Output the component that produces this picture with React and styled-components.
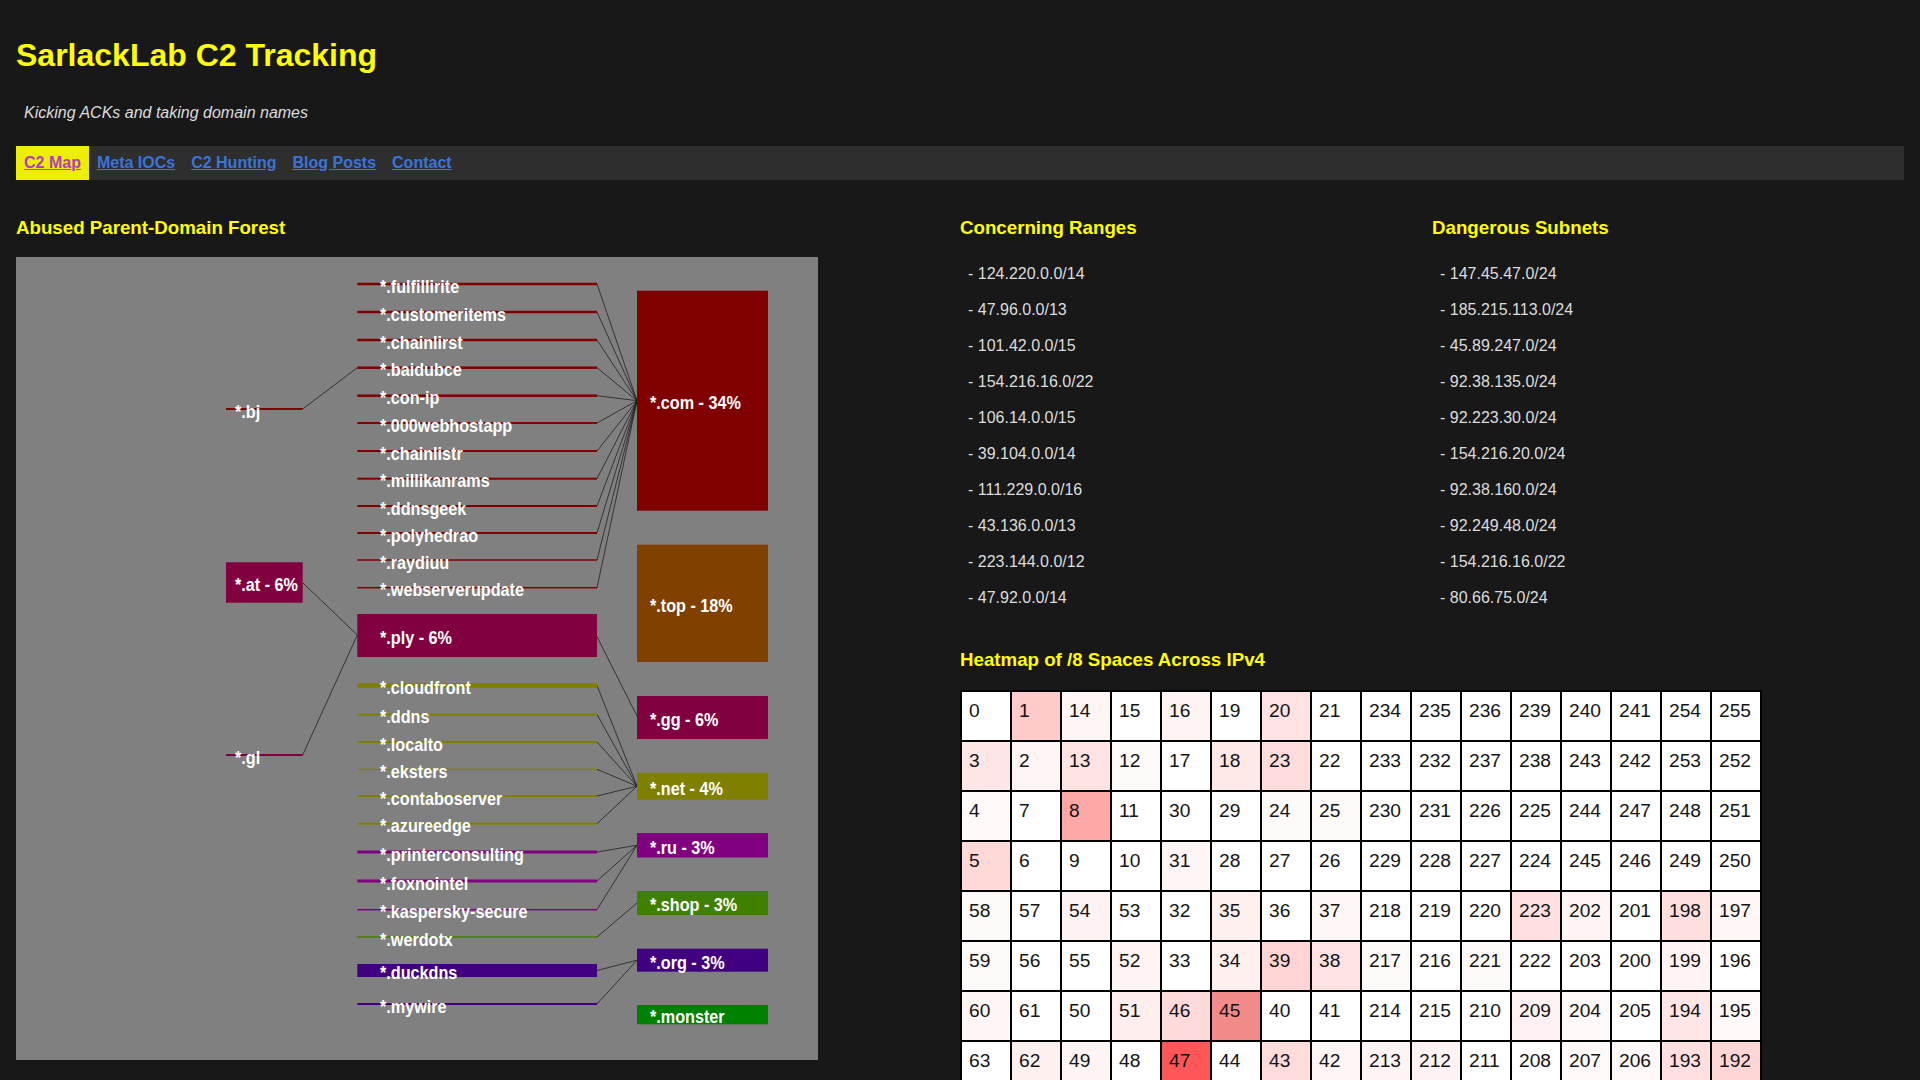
import React from 'react';
import styled, { createGlobalStyle } from 'styled-components';

const GlobalStyle = createGlobalStyle`
  html, body { margin: 0; padding: 0; background: #181818; }
  body { font-family: "Liberation Sans", Arial, sans-serif; color: #dddddd; }
  * { box-sizing: border-box; }
`;

const Page = styled.div`
  padding: 16px;
`;

const Title = styled.h1`
  margin: 21.44px 0;
  font-size: 32px;
  font-weight: 700;
  line-height: normal;
  color: #ffff00;
`;

const Tagline = styled.p`
  margin: 16px 0;
  padding: 8px;
  font-size: 16px;
  line-height: normal;
  font-style: italic;
  color: #dddddd;
`;

const Nav = styled.nav`
  display: flex;
  height: 34px;
  background: #2e2e2e;
`;

const NavLink = styled.a`
  display: block;
  padding: 8px;
  font-size: 16px;
  line-height: 18px;
  font-weight: 700;
  text-decoration: underline;
  cursor: pointer;
  color: ${(p) => (p.$active ? '#b23cc2' : '#3b74d9')};
  background: ${(p) => (p.$active ? '#eeee00' : 'transparent')};
`;

const MainGrid = styled.main`
  display: grid;
  grid-template-columns: 1fr 1fr;
  margin-top: 18px;
`;

const Column = styled.section`
  min-width: 0;
`;

const SectionTitle = styled.h3`
  margin: 18.72px 0;
  font-size: 18.72px;
  font-weight: 700;
  line-height: normal;
  color: #ffff00;
`;

const ChartFrame = styled.div`
  width: 802px;
  height: 803px;
  background: #808080;
  svg { display: block; }
`;

const RangeColumns = styled.div`
  display: grid;
  grid-template-columns: 1fr 1fr;
`;

const RangeList = styled.div`
  display: flex;
  flex-direction: column;
  gap: 16px;
  padding: 6.5px 0;
`;

const RangeItem = styled.div`
  padding: 0 8px;
  font-size: 16px;
  line-height: 20px;
  color: #dddddd;
`;

const HeatSection = styled.div`
  padding-top: 16px;
`;

const HeatGrid = styled.div`
  display: inline-grid;
  grid-template-columns: repeat(16, 48px);
  grid-auto-rows: 48px;
  gap: 2px;
  padding: 2px;
  background: #000000;
`;

const HeatCell = styled.div`
  padding: 8.5px 0 0 7px;
  font-size: 19.2px;
  line-height: 22px;
  color: #141414;
  background: ${(p) => p.$bg};
`;

/* ---------- data ---------- */

const concerning = [
  '124.220.0.0/14', '47.96.0.0/13', '101.42.0.0/15', '154.216.16.0/22', '106.14.0.0/15',
  '39.104.0.0/14', '111.229.0.0/16', '43.136.0.0/13', '223.144.0.0/12', '47.92.0.0/14',
];
const dangerous = [
  '147.45.47.0/24', '185.215.113.0/24', '45.89.247.0/24', '92.38.135.0/24', '92.223.30.0/24',
  '154.216.20.0/24', '92.38.160.0/24', '92.249.48.0/24', '154.216.16.0/22', '80.66.75.0/24',
];

const heatColors = {
  1: '#ffcaca', 14: '#fff5f5', 16: '#fff3f3', 20: '#ffe3e3',
  3: '#ffe6e6', 2: '#fff5f5', 13: '#ffe2e2', 12: '#fffafa', 18: '#ffe8e8', 23: '#ffdcdc',
  4: '#fff8f8', 8: '#ffa8a8', 24: '#fffafa', 25: '#fffafa',
  5: '#ffd8d8', 31: '#fff5f5',
  58: '#fffafa', 54: '#fff2f2', 35: '#fff0f0', 37: '#fff6f6', 223: '#ffdfdf', 202: '#fff4f4', 198: '#ffdede', 197: '#fff6f6',
  59: '#fffafa', 52: '#fff4f4', 34: '#fff0f0', 39: '#ffd4d4', 38: '#ffe2e2', 217: '#fffafa', 221: '#fffafa', 199: '#fff3f3',
  60: '#fff5f5', 51: '#ffeeee', 46: '#ffdada', 45: '#f38a8a', 209: '#fff1f1', 204: '#fff8f8', 194: '#ffe5e5', 195: '#fff8f8',
  62: '#fff0f0', 49: '#fff4f4', 47: '#ff5757', 43: '#ffdcdc', 42: '#fff5f5', 213: '#fff4f4', 212: '#fff2f2', 207: '#fff8f8', 206: '#fff8f8', 193: '#ffdfdf', 192: '#ffd6d6',
  64: '#fff6f6', 77: '#ffeaea', 89: '#fff4f4', 101: '#fff8f8', 103: '#ffe6e6', 104: '#fff4f4', 110: '#fff2f2', 111: '#ffeeee',
  116: '#fff6f6', 119: '#fff4f4', 120: '#ffefef', 122: '#fff6f6', 123: '#fff0f0', 124: '#ffe2e2', 125: '#fff6f6',
  139: '#fff8f8', 141: '#fff6f6', 146: '#fff4f4', 147: '#ffeaea', 149: '#fff8f8', 154: '#ffe8e8', 156: '#fff6f6',
  176: '#fff6f6', 178: '#fff8f8', 180: '#fff4f4', 182: '#fff6f6', 185: '#ffeaea', 188: '#fff8f8', 190: '#fff6f6',
};

function d2xy(n, d) {
  let x = 0;
  let y = 0;
  let t = d;
  for (let s = 1; s < n; s *= 2) {
    const rx = 1 & (t >> 1);
    const ry = 1 & (t ^ rx);
    if (ry === 0) {
      if (rx === 1) {
        x = s - 1 - x;
        y = s - 1 - y;
      }
      const tmp = x;
      x = y;
      y = tmp;
    }
    x += s * rx;
    y += s * ry;
    t >>= 2;
  }
  return [x, y];
}

const heatGrid = (() => {
  const g = Array.from({ length: 16 }, () => Array(16).fill(0));
  for (let d = 0; d < 256; d++) {
    const [x, y] = d2xy(16, d);
    g[y][x] = d;
  }
  return g.flat();
})();

/* chart data in page coordinates */
const tlds = {
  com: { y1: 290.7, y2: 510.7, c: '#800000', label: '*.com - 34%' },
  top: { y1: 544.7, y2: 662, c: '#804000', label: '*.top - 18%' },
  gg: { y1: 696, y2: 739, c: '#800040', label: '*.gg - 6%' },
  net: { y1: 772.7, y2: 799.7, c: '#808000', label: '*.net - 4%' },
  ru: { y1: 833, y2: 857.5, c: '#800080', label: '*.ru - 3%' },
  shop: { y1: 891, y2: 915, c: '#408000', label: '*.shop - 3%' },
  org: { y1: 948.7, y2: 971.7, c: '#400080', label: '*.org - 3%' },
  monster: { y1: 1005, y2: 1024.3, c: '#008000', label: '*.monster' },
};

const mids = [
  { label: '*.fulfillirite', y: 284, to: 'com', w: 2.5 },
  { label: '*.customeritems', y: 312, to: 'com', w: 2.5 },
  { label: '*.chainlirst', y: 340, to: 'com', w: 2.5 },
  { label: '*.baidubce', y: 367.7, to: 'com', w: 2.5 },
  { label: '*.con-ip', y: 395.7, to: 'com', w: 2.5 },
  { label: '*.000webhostapp', y: 423, to: 'com', w: 2 },
  { label: '*.chainlistr', y: 451, to: 'com', w: 2 },
  { label: '*.millikanrams', y: 478.7, to: 'com', w: 2 },
  { label: '*.ddnsgeek', y: 506, to: 'com', w: 2 },
  { label: '*.polyhedrao', y: 533, to: 'com', w: 2 },
  { label: '*.raydiuu', y: 560, to: 'com', w: 1.5 },
  { label: '*.webserverupdate', y: 587.7, to: 'com', w: 1.5 },
  { label: '*.cloudfront', y: 685.5, to: 'net', w: 4.5 },
  { label: '*.ddns', y: 714.5, to: 'net', w: 2 },
  { label: '*.localto', y: 742, to: 'net', w: 2 },
  { label: '*.eksters', y: 769.3, to: 'net', w: 1.2 },
  { label: '*.contaboserver', y: 796, to: 'net', w: 2 },
  { label: '*.azureedge', y: 823.7, to: 'net', w: 2 },
  { label: '*.printerconsulting', y: 852, to: 'ru', w: 3 },
  { label: '*.foxnointel', y: 881, to: 'ru', w: 3 },
  { label: '*.kaspersky-secure', y: 909.7, to: 'ru', w: 1.5 },
  { label: '*.werdotx', y: 937, to: 'shop', w: 1.5 },
  { label: '*.duckdns', y: 970.5, to: 'org', w: 13 },
  { label: '*.mywire', y: 1004, to: 'org', w: 2 },
];

const MX1 = 357.3;
const MX2 = 597;
const RX1 = 637;
const RX2 = 768;
const LX1 = 226;
const LX2 = 302.7;

function Label({ x, y, children }) {
  return (
    <g transform={`translate(${x},${y}) scale(0.9,1)`}>
      <text
        x="0"
        y="0"
        fill="#ffffff"
        fontFamily='"Liberation Sans", Arial, sans-serif'
        fontWeight="700"
        fontSize="18"
      >
        {children}
      </text>
    </g>
  );
}

function Link({ x1, y1, x2, y2 }) {
  return <line x1={x1} y1={y1} x2={x2} y2={y2} stroke="#1c1c1c" strokeWidth="0.9" strokeOpacity="0.85" />;
}

function DomainForest() {
  const center = (k) => (tlds[k].y1 + tlds[k].y2) / 2;
  return (
    <svg width="802" height="803" viewBox="0 0 802 803">
      <g transform="translate(-16,-257)">
        {/* connectors */}
        {mids.map((m) => (
          <Link key={'c' + m.label} x1={MX2} y1={m.y} x2={RX1} y2={center(m.to)} />
        ))}
        <Link x1={LX2} y1={409} x2={MX1} y2={367.7} />
        <Link x1={LX2} y1={582.7} x2={MX1} y2={635} />
        <Link x1={LX2} y1={755} x2={MX1} y2={635} />
        <Link x1={MX2} y1={636.7} x2={RX1} y2={716} />

        {/* right TLD boxes */}
        {Object.entries(tlds).map(([k, t]) => (
          <rect key={k} x={RX1} y={t.y1} width={RX2 - RX1} height={t.y2 - t.y1} fill={t.c} />
        ))}

        {/* middle bars */}
        {mids.map((m) => (
          <rect
            key={'b' + m.label}
            x={MX1}
            y={m.y - m.w / 2}
            width={MX2 - MX1}
            height={m.w}
            fill={tlds[m.to].c}
          />
        ))}
        <rect x={MX1} y={614} width={MX2 - MX1} height={43} fill="#800040" />

        {/* left nodes */}
        <rect x={LX1} y={408} width={LX2 - LX1} height={2} fill="#800000" />
        <rect x={LX1} y={562.3} width={LX2 - LX1} height={40.4} fill="#800040" />
        <rect x={LX1} y={754} width={LX2 - LX1} height={2} fill="#800040" />

        {/* labels */}
        {mids.map((m) => (
          <Label key={'l' + m.label} x={380} y={m.y + 8.6}>
            {m.label}
          </Label>
        ))}
        <Label x={380} y={644}>*.ply - 6%</Label>
        <Label x={235} y={418}>*.bj</Label>
        <Label x={235} y={590.7}>*.at - 6%</Label>
        <Label x={235} y={764}>*.gl</Label>
        {Object.entries(tlds).map(([k, t]) => (
          <Label key={'t' + k} x={650} y={(t.y1 + t.y2) / 2 + 8.3}>
            {t.label}
          </Label>
        ))}
      </g>
    </svg>
  );
}

const navItems = ['C2 Map', 'Meta IOCs', 'C2 Hunting', 'Blog Posts', 'Contact'];

export default function App() {
  return (
    <>
      <GlobalStyle />
      <Page>
        <Title>SarlackLab C2 Tracking</Title>
        <Tagline>Kicking ACKs and taking domain names</Tagline>
        <Nav>
          {navItems.map((n, i) => (
            <NavLink key={n} $active={i === 0}>
              {n}
            </NavLink>
          ))}
        </Nav>
        <MainGrid>
          <Column>
            <SectionTitle>Abused Parent-Domain Forest</SectionTitle>
            <ChartFrame>
              <DomainForest />
            </ChartFrame>
          </Column>
          <Column>
            <RangeColumns>
              <div>
                <SectionTitle>Concerning Ranges</SectionTitle>
                <RangeList>
                  {concerning.map((r) => (
                    <RangeItem key={r}>- {r}</RangeItem>
                  ))}
                </RangeList>
              </div>
              <div>
                <SectionTitle>Dangerous Subnets</SectionTitle>
                <RangeList>
                  {dangerous.map((r) => (
                    <RangeItem key={r}>- {r}</RangeItem>
                  ))}
                </RangeList>
              </div>
            </RangeColumns>
            <HeatSection>
              <SectionTitle>Heatmap of /8 Spaces Across IPv4</SectionTitle>
              <HeatGrid>
                {heatGrid.map((d) => (
                  <HeatCell key={d} $bg={heatColors[d] || '#ffffff'}>
                    {d}
                  </HeatCell>
                ))}
              </HeatGrid>
            </HeatSection>
          </Column>
        </MainGrid>
      </Page>
    </>
  );
}
